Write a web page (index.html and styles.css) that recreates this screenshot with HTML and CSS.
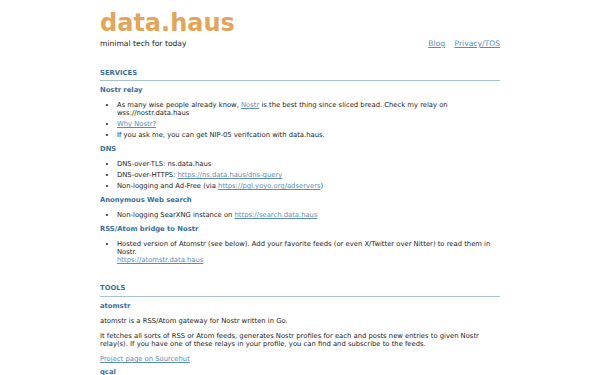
FILE: index.html
```html
<!DOCTYPE html>
<html lang="en">
  <head>
    <meta charset="UTF-8" />
    <meta name="viewport" content="width=device-width, initial-scale=1.0" />
    <title>data.haus</title>
    <link rel="stylesheet" href="styles.css">
  </head>
  <body>
    <div class="page">
      <header class="site-header">
        <h1 class="site-title">data.haus</h1>
        <div class="site-bar">
          <span class="tagline">minimal tech for today</span>
          <nav class="site-nav">
            <a href="#">Blog</a>
            <a href="#">Privacy/TOS</a>
          </nav>
        </div>
      </header>

      <!-- services -->
      <section class="block">
        <h2 class="block-title">SERVICES</h2>

        <h3 class="item-title">Nostr relay</h3>
        <ul class="item-list">
          <li>As many wise people already know, <a href="#">Nostr</a> is the best thing since sliced bread. Check my relay on wss://nostr.data.haus</li>
          <li><a href="#">Why Nostr?</a></li>
          <li>If you ask me, you can get NIP-05 verifcation with data.haus.</li>
        </ul>

        <h3 class="item-title">DNS</h3>
        <ul class="item-list">
          <li>DNS-over-TLS: ns.data.haus</li>
          <li>DNS-over-HTTPS: <a href="#">https://ns.data.haus/dns-query</a></li>
          <li>Non-logging and Ad-Free (via <a href="#">https://pgl.yoyo.org/adservers</a>)</li>
        </ul>

        <h3 class="item-title">Anonymous Web search</h3>
        <ul class="item-list">
          <li>Non-logging SearXNG instance on <a href="#">https://search.data.haus</a></li>
        </ul>

        <h3 class="item-title">RSS/Atom bridge to Nostr</h3>
        <ul class="item-list">
          <li>Hosted version of Atomstr (see below). Add your favorite feeds (or even X/Twitter over Nitter) to read them in Nostr.<br><a href="#">https://atomstr.data.haus</a></li>
        </ul>
      </section>

      <!-- tools -->
      <section class="block">
        <h2 class="block-title">TOOLS</h2>

        <h3 class="item-title">atomstr</h3>
        <p>atomstr is a RSS/Atom gateway for Nostr written in Go.</p>
        <p>It fetches all sorts of RSS or Atom feeds, generates Nostr profiles for each and posts new entries to given Nostr relay(s). If you have one of these relays in your profile, you can find and subscribe to the feeds.</p>
        <p><a href="#">Project page on Sourcehut</a></p>

        <h3 class="item-title">qcal</h3>
      </section>
    </div>
  </body>
</html>
```

FILE: styles.css
```css
body {
  margin: 0;
  background: #ffffff;
  color: #222;
  font-family: "DejaVu Sans", sans-serif;
  font-size: 6.8px;
  line-height: 8px;
}

.page {
  width: 400px;
  margin: 0 auto;
}

a {
  color: #5b8bb4;
}

/* header */
.site-header {
  padding-top: 8px;
}

.site-title {
  margin: 0;
  font-size: 24px;
  line-height: 30px;
  font-weight: bold;
  color: #e2a55c;
}

.site-bar {
  display: flex;
  justify-content: space-between;
  align-items: baseline;
  margin-top: 1px;
  font-size: 7.6px;
  line-height: 9px;
}

.site-nav a {
  margin-left: 7px;
}

/* sections */
.block {
  margin-top: 21px;
}

.block + .block {
  margin-top: 20px;
}

.block-title {
  margin: 0;
  padding-bottom: 3px;
  font-size: 6.8px;
  color: #3a6e9b;
  border-bottom: 1px solid #a7c3cc;
}

.block + .block .block-title {
  padding-bottom: 4px;
}

.item-title {
  margin: 6px 0 0;
  font-size: 6.8px;
  color: #3a6e9b;
}

.block-title + .item-title {
  margin-top: 5px;
}

p + .item-title {
  margin-top: 5px;
}

.item-list {
  margin: 7px 0 0;
  padding-left: 17px;
}

.item-list li {
  margin-bottom: 3px;
}

.block p {
  margin: 7px 0 0;
}
```
